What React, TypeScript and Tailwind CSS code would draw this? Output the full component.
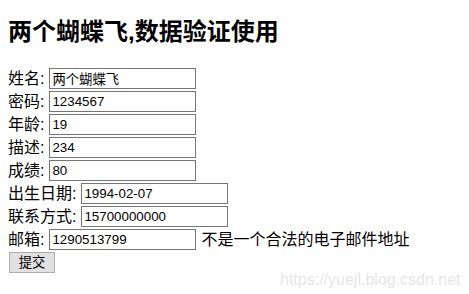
const fields = [
  { label: "姓名:", value: "两个蝴蝶飞" },
  { label: "密码:", value: "1234567" },
  { label: "年龄:", value: "19" },
  { label: "描述:", value: "234" },
  { label: "成绩:", value: "80" },
  { label: "出生日期:", value: "1994-02-07" },
  { label: "联系方式:", value: "15700000000" },
  { label: "邮箱:", value: "1290513799", error: "不是一个合法的电子邮件地址" },
];

export default function App() {
  return (
    <div
      className="relative w-[469px] h-[294px] bg-white text-black px-2 overflow-hidden"
      style={{ fontFamily: '"Liberation Sans", "Noto Sans CJK SC", sans-serif' }}
    >
      <h2 className="pt-[18px] text-[24px] leading-[28px] font-bold">两个蝴蝶飞,数据验证使用</h2>

      <form className="mt-[21px] flex flex-col" onSubmit={(e) => e.preventDefault()}>
        {fields.map((f) => (
          <div key={f.label} className="flex items-center h-[23px] text-[16px]">
            <span className="mr-[5px]">{f.label}</span>
            <input
              defaultValue={f.value}
              className="w-[147px] h-[21px] border border-[#767676] px-[2px] text-[13.33px] outline-none"
            />
            {f.error && <span className="ml-[5px]">{f.error}</span>}
          </div>
        ))}
        <div className="flex items-center h-[23px]">
          <button
            type="submit"
            className="ml-px w-[46px] h-[21px] bg-[#e1e1e1] border border-[#adadad] text-[13.33px] leading-none"
          >
            提交
          </button>
        </div>
      </form>

      <span className="absolute left-[280px] top-[268px] text-[16px] text-[#e6e6e6]">
        https://yuejl.blog.csdn.net
      </span>
    </div>
  );
}
